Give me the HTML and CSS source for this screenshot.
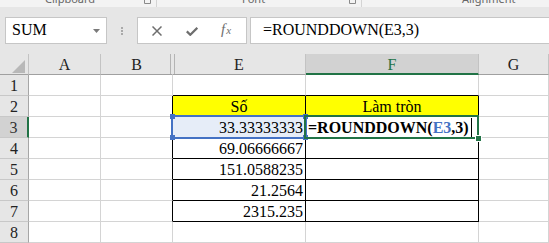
FILE: index.html
```html
<!DOCTYPE html>
<html>
<head>
<meta charset="utf-8">
<link rel="stylesheet" href="styles.css">
</head>
<body>
<div class="ribbon">
  <div class="grp g1"><span class="lbl">Clipboard</span><svg class="launch" width="7" height="5" viewBox="0 0 7 5"><path d="M0.5 0V4.5H6.5V0" fill="none" stroke="#8a8a8a" stroke-width="1"/></svg></div>
  <div class="grp g2"><span class="lbl">Font</span><svg class="launch" width="7" height="5" viewBox="0 0 7 5"><path d="M0.5 0V4.5H6.5V0" fill="none" stroke="#8a8a8a" stroke-width="1"/></svg></div>
  <div class="grp g3"><span class="lbl">Alignment</span></div>
</div>
<div class="fbar">
  <div class="namebox"><span class="nbtext">SUM</span><svg class="caret" width="7" height="4" viewBox="0 0 7 4"><path d="M0 0H7L3.5 4Z" fill="#7a7a7a"/></svg></div>
  <div class="dots"><i></i><i></i><i></i></div>
  <div class="fbtns">
    <svg class="ico-x" width="10" height="10" viewBox="0 0 10 10"><path d="M0.5 0.5L9.5 9.5M9.5 0.5L0.5 9.5" stroke="#6e6e6e" stroke-width="1.5" fill="none"/></svg>
    <svg class="ico-ok" width="12" height="9" viewBox="0 0 12 9"><path d="M0.8 4.4L4.3 7.8L11.3 0.8" stroke="#6e6e6e" stroke-width="2.2" fill="none"/></svg>
    <span class="fx"><i>f</i><i class="fxx">x</i></span>
  </div>
  <div class="finput">=ROUNDDOWN(E3,3)</div>
</div>
<div class="sheet">
  <div class="c h corner"><svg width="13" height="13" viewBox="0 0 13 13"><path d="M13 0V13H0Z" fill="#b8b8b8"/></svg></div>
  <div class="c h">A</div>
  <div class="c h hb">B</div>
  <div class="c h he">E</div>
  <div class="c h hsel">F</div>
  <div class="c h">G</div>

  <div class="c rh">1</div><div class="c"></div><div class="c"></div><div class="c tb"></div><div class="c tb"></div><div class="c"></div>

  <div class="c rh">2</div><div class="c"></div><div class="c tl"></div><div class="c t y ctr">Số</div><div class="c t y ctr">Làm tròn</div><div class="c"></div>

  <div class="c rh rsel">3</div><div class="c"></div><div class="c tl"></div>
  <div class="c t num ref">33.33333333<span class="refbox"><i class="hd h1"></i><i class="hd h2"></i><i class="hd h3"></i><i class="hd h4"></i></span></div>
  <div class="c t act"><b class="fml">=ROUNDDOWN(<span class="refc">E3</span>,3)</b><span class="cursor"></span><span class="actbox"><i class="fill"></i></span></div>
  <div class="c"></div>

  <div class="c rh">4</div><div class="c"></div><div class="c tl"></div><div class="c t num">69.06666667</div><div class="c t"></div><div class="c"></div>
  <div class="c rh">5</div><div class="c"></div><div class="c tl"></div><div class="c t num">151.0588235</div><div class="c t"></div><div class="c"></div>
  <div class="c rh">6</div><div class="c"></div><div class="c tl"></div><div class="c t num">21.2564</div><div class="c t"></div><div class="c"></div>
  <div class="c rh">7</div><div class="c"></div><div class="c tl"></div><div class="c t num">2315.235</div><div class="c t"></div><div class="c"></div>
  <div class="c rh">8</div><div class="c"></div><div class="c"></div><div class="c"></div><div class="c"></div><div class="c"></div>
</div>
</body>
</html>
```
FILE: styles.css
```css
html, body {
  margin: 0;
  padding: 0;
  background: #ffffff;
  overflow: hidden;
}
body {
  width: 549px;
  height: 243px;
  font-family: "Liberation Serif", "Times New Roman", serif;
}

/* ribbon strip */
.ribbon {
  display: flex;
  height: 7px;
  background: #f3f3f3;
  overflow: hidden;
}
.grp {
  display: flex;
  align-items: flex-start;
  border-right: 1px solid #d4d4d4;
  box-sizing: border-box;
  flex: none;
}
.g1 { width: 157px; padding-left: 45px; }
.g2 { width: 205px; padding-left: 85px; }
.g3 { width: 260px; padding-left: 100px; }
.lbl {
  font-family: "Noto Sans", "Open Sans", sans-serif;
  font-size: 11px;
  line-height: 14px;
  margin-top: -8px;
  color: #666666;
  white-space: nowrap;
}
.launch {
  margin-left: auto;
  margin-right: 5px;
  margin-top: -1px;
}

/* formula bar */
.fbar {
  display: flex;
  align-items: flex-start;
  height: 47px;
  padding-top: 10px;
  box-sizing: border-box;
  background: #e6e6e6;
}
.namebox {
  margin-left: 5px;
  width: 102px;
  height: 27px;
  box-sizing: border-box;
  border: 1px solid #c6c6c6;
  background: #ffffff;
  display: flex;
  align-items: center;
  padding-left: 6px;
  padding-right: 6px;
}
.nbtext {
  font-size: 16px;
  line-height: 23px;
  color: #000;
  align-self: flex-start;
}
.caret {
  margin-left: auto;
}
.dots {
  margin-left: 14px;
  margin-top: 10px;
  display: flex;
  flex-direction: column;
  gap: 1px;
}
.dots i {
  display: block;
  width: 2px;
  height: 2px;
  background: #a9a9a9;
}
.fbtns {
  margin-left: 14px;
  width: 110px;
  height: 27px;
  box-sizing: border-box;
  border: 1px solid #c6c6c6;
  background: #ffffff;
  display: flex;
  align-items: center;
  padding-left: 14px;
}
.ico-x { margin-top: 0; }
.ico-ok { margin-left: 24px; margin-top: 1px; }
.fx {
  margin-left: 23px;
  font-family: "Liberation Serif", serif;
  font-size: 15px;
  color: #6e6e6e;
  line-height: 15px;
  margin-top: -1px;
}
.fx i { font-style: italic; }
.fxx { font-size: 11px; margin-left: 1px; }
.finput {
  margin-left: 3px;
  margin-right: -6px;
  flex: 1;
  height: 27px;
  box-sizing: border-box;
  border: 1px solid #c6c6c6;
  background: #ffffff;
  padding-left: 12px;
  font-size: 16px;
  line-height: 23px;
  color: #000;
  white-space: nowrap;
}

/* sheet */
.sheet {
  display: grid;
  grid-template-columns: 29px 72px 72px 133px 173px 1fr;
  grid-auto-rows: 21px;
}
.c {
  box-sizing: border-box;
  border-right: 1px solid #d4d4d4;
  border-bottom: 1px solid #d4d4d4;
  font-size: 16px;
  line-height: 22px;
  padding: 0 2px;
  white-space: nowrap;
  color: #000;
  position: relative;
}
.h {
  background: #e6e6e6;
  border-right-color: #c3c3c3;
  border-bottom-color: #a0a0a0;
  text-align: center;
  color: #222;
  overflow: hidden;
}
.corner {
  display: flex;
  align-items: flex-end;
  justify-content: flex-end;
  padding: 0 3px 1px 0;
}
.corner svg { display: block; }
.hb {
  border-right-color: #e6e6e6;
  box-shadow: inset -1px 0 0 #e6e6e6, inset -2px 0 0 #b4b4b4;
}
.he {
  box-shadow: inset 1px 0 0 #e6e6e6, inset 2px 0 0 #b4b4b4;
}
.hsel {
  background: #d2d2d2;
  border-bottom: 2px solid #217346;
  color: #217346;
}
.rh {
  background: #e6e6e6;
  border-right-color: #a6a6a6;
  border-bottom-color: #c8c8c8;
  text-align: center;
  color: #222;
  padding: 0;
}
.rsel {
  background: #d2d2d2;
  border-right: 2px solid #217346;
  color: #333;
}
.tb { border-bottom-color: #000; }
.tl { border-right-color: #000; }
.t {
  border-right-color: #000;
  border-bottom-color: #000;
}
.y { background: #ffff00; }
.ctr { text-align: center; }
.num { text-align: right; }
.ref { background: #e6edf8; }

.refbox {
  position: absolute;
  left: -2px;
  top: -2px;
  right: -2px;
  bottom: -2px;
  border: 2px solid #4472c4;
  z-index: 2;
}
.hd {
  position: absolute;
  width: 5px;
  height: 5px;
  background: #4472c4;
  z-index: 5;
}
.h1 { left: -3px; top: -3px; }
.h2 { right: -3px; top: -3px; }
.h3 { left: -3px; bottom: -3px; }
.h4 { right: -3px; bottom: -3px; }

.act { padding-left: 2px; }
.fml {
  font-weight: bold;
  font-size: 16px;
}
.refc { color: #4472c4; }
.cursor {
  display: inline-block;
  width: 1px;
  height: 19px;
  background: #000;
  margin-left: 2px;
  vertical-align: -4px;
}
.actbox {
  position: absolute;
  left: -2px;
  top: -2px;
  right: -1px;
  bottom: -2px;
  border: 2px solid #217346;
  z-index: 3;
}
.fill {
  position: absolute;
  right: -4px;
  bottom: -4px;
  width: 5px;
  height: 5px;
  background: #217346;
  outline: 1px solid #ffffff;
}
```
